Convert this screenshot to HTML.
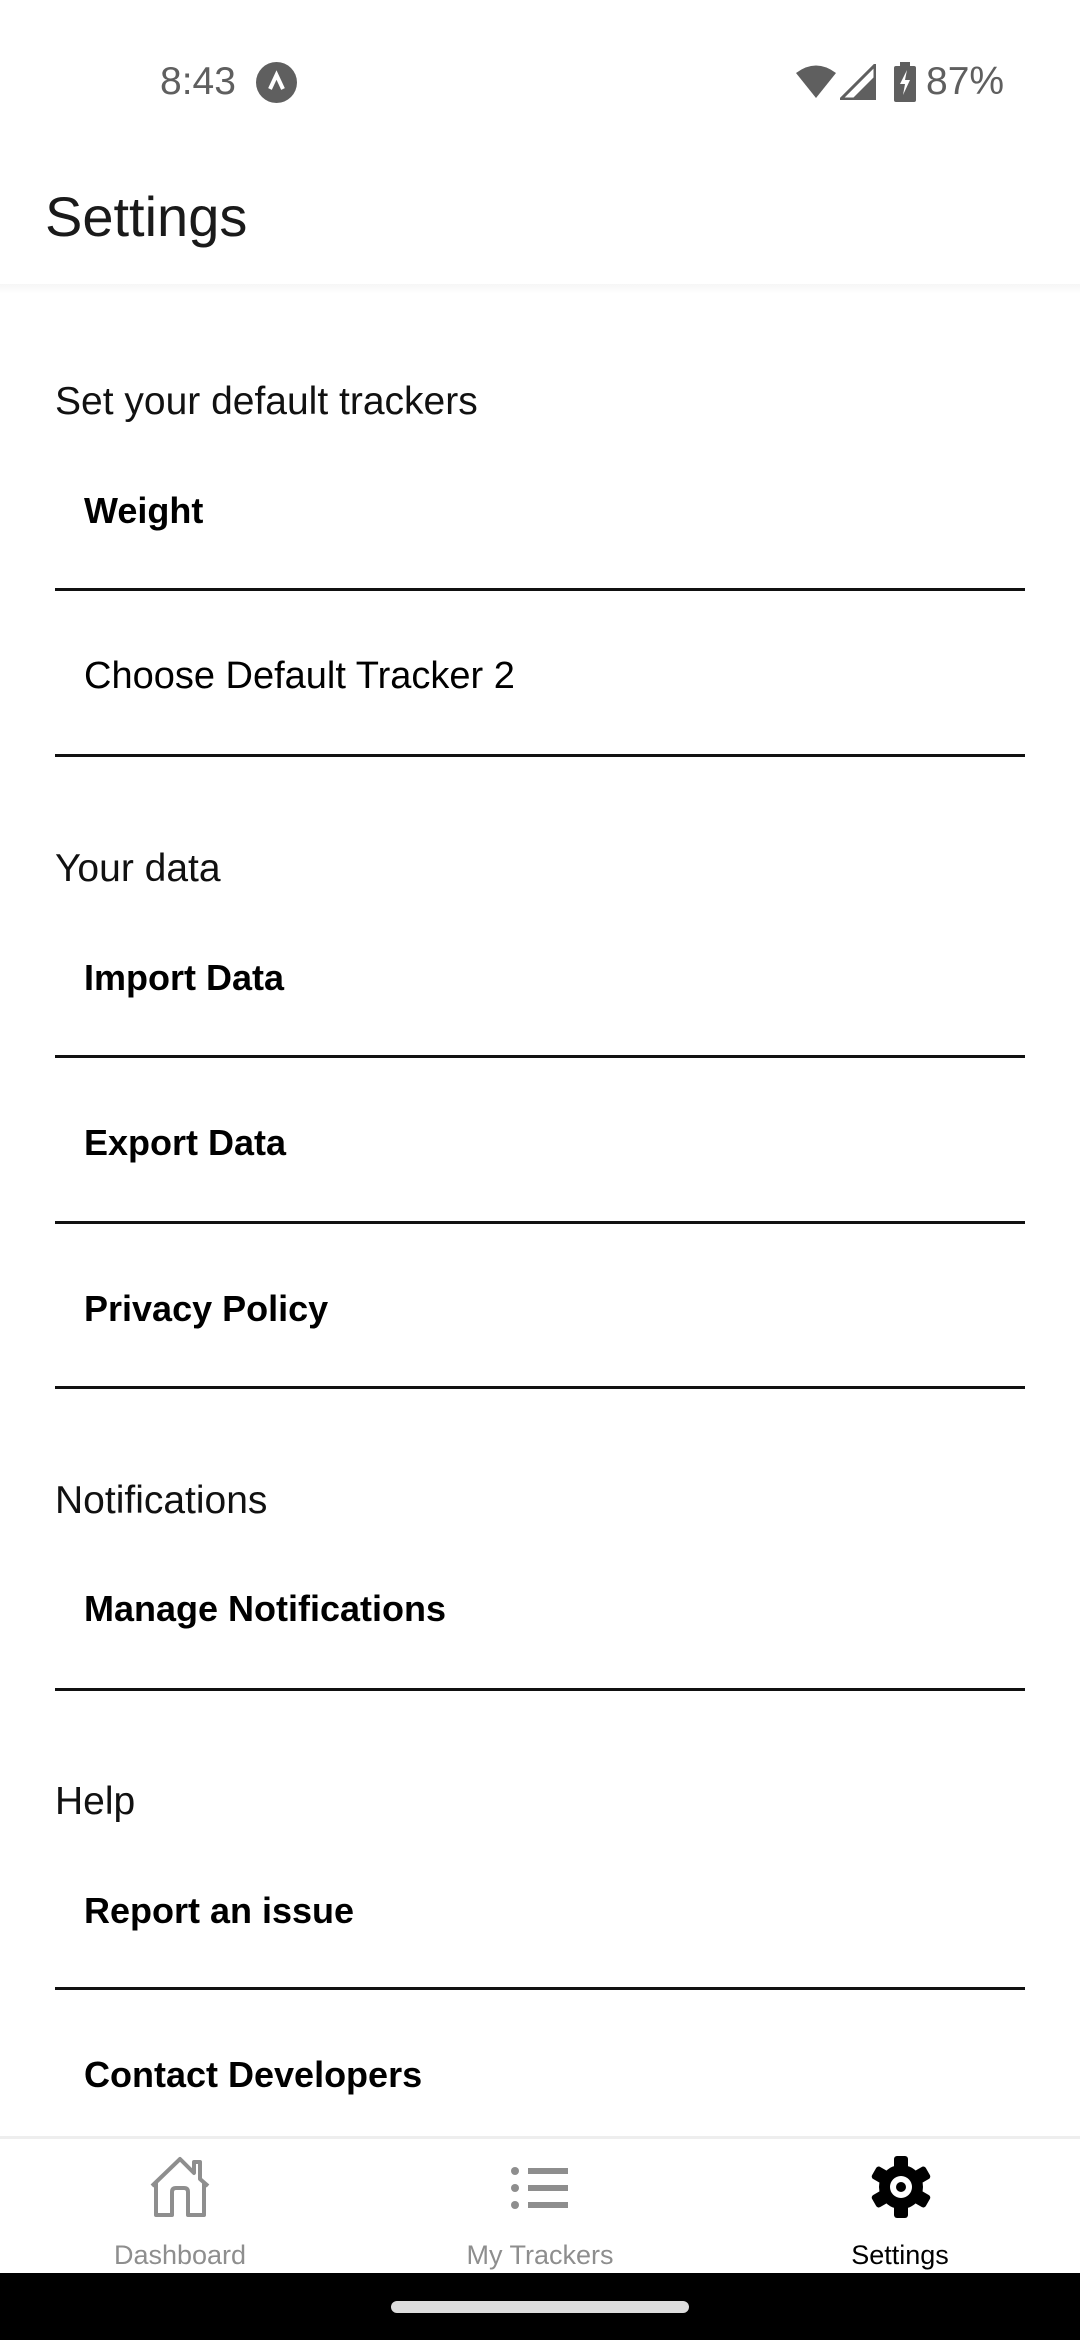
<!DOCTYPE html>
<html><head><meta charset="utf-8"><style>
*{margin:0;padding:0;box-sizing:border-box}
body{width:1080px;height:2340px;position:relative;background:#fff;font-family:"Liberation Sans",Roboto,sans-serif;overflow:hidden;color:#111}
.t{position:absolute;white-space:nowrap;line-height:50px;height:50px}
.lab{left:55px;font-size:39px;color:#111}
.it{left:84px;font-size:36px;font-weight:bold;color:#000}
.ln{position:absolute;left:55px;width:970px;height:3px;background:#111}
.nl{position:absolute;top:2237px;font-size:27px;width:300px;text-align:center;line-height:36px;color:#8e8e8e}
</style></head><body>
<div class="t" style="left:160px;top:57px;font-size:39px;color:#5f5f5f">8:43</div>
<svg style="position:absolute;left:256px;top:62px" width="41" height="41" viewBox="0 0 41 41"><circle cx="20.5" cy="20.5" r="20.5" fill="#5f5f5f"/><path d="M14 27 L20.5 13 L27 27" stroke="#fff" stroke-width="4" fill="none"/></svg>
<svg style="position:absolute;left:795px;top:64px" width="42" height="36" viewBox="0 0 42 36"><path d="M1 9 Q21 -6 41 9 L21 34 Z" fill="#5f5f5f"/></svg>
<svg style="position:absolute;left:840px;top:64px" width="36" height="36" viewBox="0 0 36 36"><path d="M35 1 L35 35 L1 35 Z" fill="none" stroke="#5f5f5f" stroke-width="3"/><path d="M35 12 L35 35 L12 35 Z" fill="#5f5f5f"/></svg>
<svg style="position:absolute;left:893px;top:62px" width="24" height="40" viewBox="0 0 24 40"><rect x="7" y="0" width="10" height="4" fill="#5f5f5f"/><rect x="1" y="4" width="22" height="36" rx="2" fill="#5f5f5f"/><path d="M14 8 L7 22 L12 22 L10 33 L17 18 L12 18 Z" fill="#fff"/></svg>
<div class="t" style="left:926px;top:57px;font-size:39px;color:#5f5f5f">87%</div>

<div class="t" style="left:45px;top:188px;font-size:56px;line-height:58px;height:58px;color:#1a1a1a">Settings</div>
<div style="position:absolute;left:0;top:284px;width:1080px;height:10px;background:linear-gradient(#f6f6f6,#fff)"></div>

<div class="t lab" style="top:377px">Set your default trackers</div>
<div class="t it" style="top:486px">Weight</div>
<div class="ln" style="top:588px"></div>
<div class="t it" style="top:651px;font-weight:normal;font-size:38px">Choose Default Tracker 2</div>
<div class="ln" style="top:754px"></div>

<div class="t lab" style="top:844px">Your data</div>
<div class="t it" style="top:953px">Import Data</div>
<div class="ln" style="top:1055px"></div>
<div class="t it" style="top:1118px">Export Data</div>
<div class="ln" style="top:1221px"></div>
<div class="t it" style="top:1284px">Privacy Policy</div>
<div class="ln" style="top:1386px"></div>

<div class="t lab" style="top:1476px">Notifications</div>
<div class="t it" style="top:1584px">Manage Notifications</div>
<div class="ln" style="top:1688px"></div>

<div class="t lab" style="top:1777px">Help</div>
<div class="t it" style="top:1886px">Report an issue</div>
<div class="ln" style="top:1987px"></div>
<div class="t it" style="top:2050px">Contact Developers</div>

<div style="position:absolute;left:0;top:2136px;width:1080px;height:137px;background:#fff;border-top:3px solid #eee"></div>
<svg style="position:absolute;left:148px;top:2156px" width="64" height="62" viewBox="0 0 64 62"><path d="M4 30 L32 3 L46 17 L46 6 L52 6 L52 23 L60 30 M8 26 L8 59 L24 59 L24 36 Q24 32 28 32 L36 32 Q40 32 40 36 L40 59 L56 59 L56 26" fill="none" stroke="#8e8e8e" stroke-width="4" stroke-linejoin="round"/></svg>
<svg style="position:absolute;left:510px;top:2166px" width="60" height="44" viewBox="0 0 60 44"><circle cx="5" cy="5" r="4" fill="#8e8e8e"/><circle cx="5" cy="22" r="4" fill="#8e8e8e"/><circle cx="5" cy="39" r="4" fill="#8e8e8e"/><rect x="18" y="2" width="40" height="6" fill="#8e8e8e"/><rect x="18" y="19" width="40" height="6" fill="#8e8e8e"/><rect x="18" y="36" width="40" height="6" fill="#8e8e8e"/></svg>
<svg style="position:absolute;left:869px;top:2155px" width="64" height="64" viewBox="-32 -32 64 64"><g fill="#000"><circle r="22"/><rect x="-7" y="-31" width="14" height="62" rx="3"/><rect x="-7" y="-31" width="14" height="62" rx="3" transform="rotate(60)"/><rect x="-7" y="-31" width="14" height="62" rx="3" transform="rotate(120)"/></g><circle r="11" fill="#fff"/><circle r="5" fill="#000"/></svg>
<div class="nl" style="left:30px">Dashboard</div>
<div class="nl" style="left:390px">My Trackers</div>
<div class="nl" style="left:750px;color:#000">Settings</div>

<div style="position:absolute;left:0;top:2273px;width:1080px;height:67px;background:#000"></div>
<div style="position:absolute;left:391px;top:2301px;width:298px;height:12px;border-radius:6px;background:#ddd"></div>
</body></html>
